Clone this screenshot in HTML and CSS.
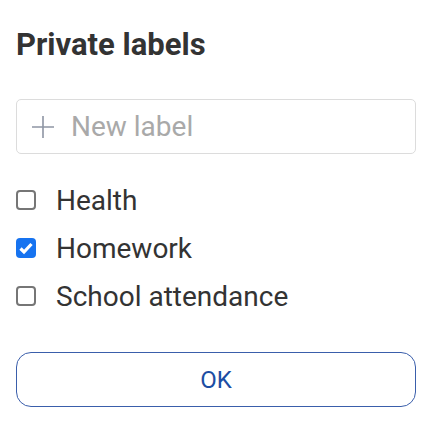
FILE: index.html
```html
<!DOCTYPE html>
<html>
<head>
<meta charset="utf-8">
<link rel="stylesheet" href="styles.css">
</head>
<body>
<div class="dialog">
  <h1 class="title">Private labels</h1>
  <label class="new-label">
    <svg class="plus" width="26" height="26" viewBox="0 0 26 26"><path d="M13 2v22M2 13h22" stroke="#8e95a4" stroke-width="1.6" fill="none"/></svg>
    <input class="new-input" type="text" placeholder="New label">
  </label>
  <ul class="labels">
    <li class="row"><input type="checkbox" class="cb"><span class="name">Health</span></li>
    <li class="row"><input type="checkbox" class="cb" checked><span class="name">Homework</span></li>
    <li class="row"><input type="checkbox" class="cb"><span class="name">School attendance</span></li>
  </ul>
  <button class="ok">OK</button>
</div>
</body>
</html>
```

FILE: styles.css
```css
html, body {
  margin: 0;
  padding: 0;
  background: #fff;
}
body {
  font-family: Roboto, "Liberation Sans", sans-serif;
  color: #333333;
}
.dialog {
  display: flex;
  flex-direction: column;
  padding: 27px 16px 0 16px;
}
.title {
  margin: 0;
  font-size: 31px;
  line-height: 36px;
  font-weight: 700;
  color: #333;
}
.new-label {
  margin-top: 36px;
  height: 55px;
  box-sizing: border-box;
  border: 1px solid #dcdcdc;
  border-radius: 5px;
  display: flex;
  align-items: center;
  padding-left: 13px;
  gap: 15px;
}
.plus {
  flex: none;
}
.new-input {
  border: none;
  outline: none;
  font-family: inherit;
  font-size: 28px;
  color: #333;
  padding: 0;
  flex: 1;
  min-width: 0;
  background: transparent;
}
.new-input::placeholder {
  color: #a9a9a9;
}
.labels {
  list-style: none;
  margin: 22px 0 0 0;
  padding: 0;
}
.row {
  height: 48px;
  display: flex;
  align-items: center;
  gap: 20px;
}
.cb {
  appearance: none;
  -webkit-appearance: none;
  margin: 0;
  width: 20px;
  height: 20px;
  box-sizing: border-box;
  border: 2px solid #767676;
  border-radius: 4px;
  background: #fff;
  flex: none;
}
.cb:checked {
  border: none;
  background: #1673f0 url("data:image/svg+xml;utf8,<svg xmlns='http://www.w3.org/2000/svg' viewBox='0 0 20 20'><path d='M4.5 10.5l3.5 3.5 7.5-8' stroke='white' stroke-width='3.2' fill='none'/></svg>") center/100% 100% no-repeat;
}
.name {
  font-size: 28px;
  color: #333;
}
.ok {
  margin-top: 32px;
  height: 55px;
  box-sizing: border-box;
  border: 1px solid #3a5eab;
  border-radius: 15px;
  background: #fff;
  font-family: inherit;
  font-size: 24px;
  color: #1c4da3;
}
```
